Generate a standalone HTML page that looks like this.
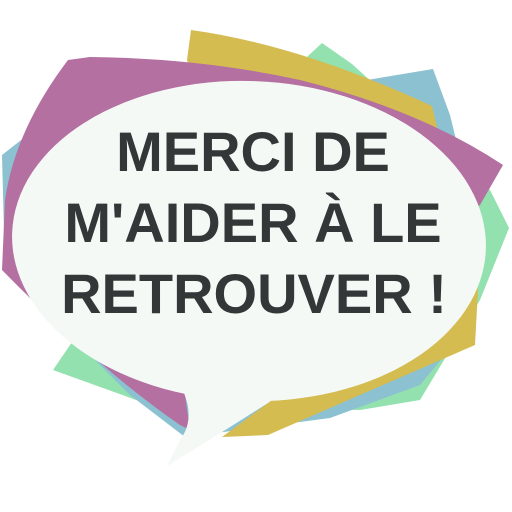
<!DOCTYPE html>
<html><head><style>
html,body{margin:0;padding:0;background:#fff;width:512px;height:512px;overflow:hidden}
svg{position:absolute;left:0;top:0}
.t{font-family:"Liberation Sans",sans-serif;font-weight:bold;font-size:56px;fill:#333738;text-anchor:middle}
</style></head><body>
<svg width="512" height="512" viewBox="0 0 512 512">
<polygon fill="#93e1ae" points="308,56 322,43 352,64 490,190 509,228 480,300 420,400 360,410 150,405 53,370 70,345"/>
<polygon fill="#8bc1d0" points="2,155 25,137 433,69 450,115 478,230 470,300 445,355 420,385 330,418 185,437 130,395 5,270"/>
<path fill="#d4bc51" d="M191,30 Q300,45 432,106 L445,160 L478,290 L475,345 L268,435 L222,437 L268,403 L250,250 L187,60 Z"/>
<path fill="#b370a0" d="M68,60 L90,57 Q200,58 300,80 Q420,110 503,165 L480,205 L200,400 L185,395 L190,430 L180,425 Q100,370 2,270 L5,200 Q15,130 68,60 Z"/>
<ellipse cx="249" cy="241" rx="237" ry="160" fill="#f5f9f6" transform="rotate(2 249 241)"/>
<path fill="#f5f9f6" d="M165,370 L184,393 Q195,420 180,440 L167,466 Q210,440 268,403 L300,380 Z"/>
<text class="t" x="253" y="171">MERCI DE</text>
<text class="t" x="253" y="242">M'AIDER À LE</text>
<text class="t" x="254" y="313">RETROUVER !</text>
</svg>
</body></html>
